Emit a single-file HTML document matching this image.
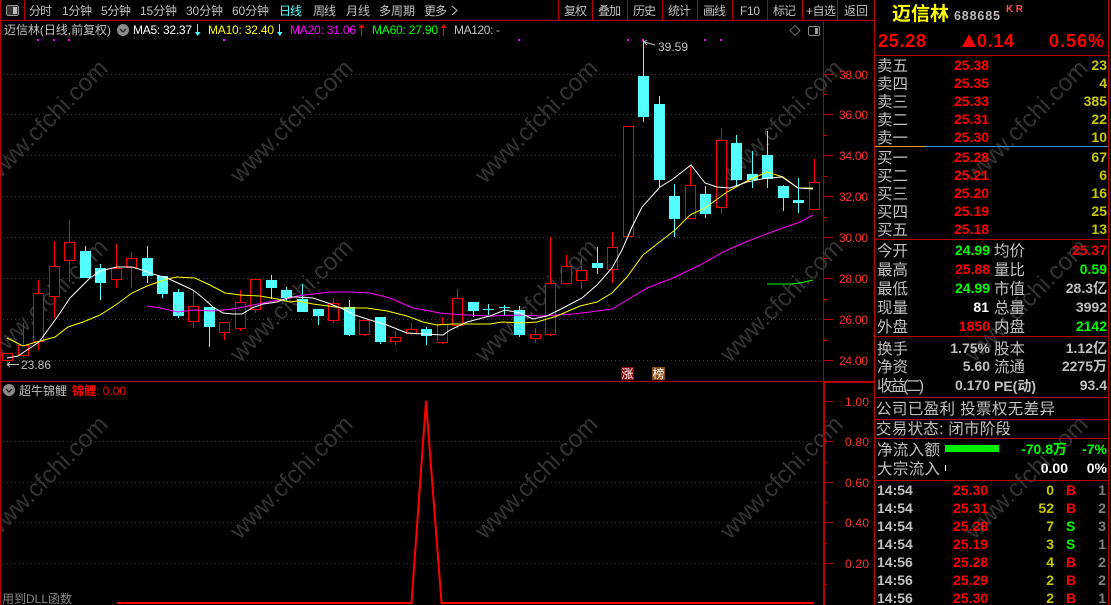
<!DOCTYPE html>
<html><head><meta charset="utf-8">
<style>
html,body{margin:0;padding:0;background:#000;width:1111px;height:605px;overflow:hidden}
svg{display:block;position:absolute;left:0;top:0}
text{font-family:"Liberation Sans","WenQuanYi Zen Hei","Noto Sans CJK SC",sans-serif;white-space:pre}
.g{fill:#c0c0c0}.r{fill:#ff0000}.gn{fill:#00ff00}.y{fill:#c8c800}.w{fill:#fff}
.t{font-size:12px;fill:#c0c0c0}
.a{font-size:12px;fill:#ff3232}
.l{font-size:15.5px;fill:#c0c0c0}
.n{font-size:14px;font-weight:bold}
.e{text-anchor:end}
.wm{font-size:24.5px;fill:#333;text-anchor:middle}
</style></head><body>
<svg width="1111" height="605" viewBox="0 0 1111 605" xmlns="http://www.w3.org/2000/svg">
<rect width="1111" height="605" fill="#000"/>
<!-- watermarks -->
<g>
<text class="wm" transform="translate(52,127) rotate(-45)">www.cfchi.com</text>
<text class="wm" transform="translate(297,127) rotate(-45)">www.cfchi.com</text>
<text class="wm" transform="translate(542,127) rotate(-45)">www.cfchi.com</text>
<text class="wm" transform="translate(787,127) rotate(-45)">www.cfchi.com</text>
<text class="wm" transform="translate(1032,127) rotate(-45)">www.cfchi.com</text>
<text class="wm" transform="translate(52,306) rotate(-45)">www.cfchi.com</text>
<text class="wm" transform="translate(297,306) rotate(-45)">www.cfchi.com</text>
<text class="wm" transform="translate(542,306) rotate(-45)">www.cfchi.com</text>
<text class="wm" transform="translate(787,306) rotate(-45)">www.cfchi.com</text>
<text class="wm" transform="translate(1032,306) rotate(-45)">www.cfchi.com</text>
<text class="wm" transform="translate(52,483) rotate(-45)">www.cfchi.com</text>
<text class="wm" transform="translate(297,483) rotate(-45)">www.cfchi.com</text>
<text class="wm" transform="translate(542,483) rotate(-45)">www.cfchi.com</text>
<text class="wm" transform="translate(787,483) rotate(-45)">www.cfchi.com</text>
<text class="wm" transform="translate(1032,483) rotate(-45)">www.cfchi.com</text>
</g>
<!-- grid -->
<g stroke="#d00000" stroke-dasharray="1 3" shape-rendering="crispEdges" fill="none">
<path d="M3 74.5H823M3 114.5H823M3 155.5H823M3 196.5H823M3 237.5H823M3 278.5H823M3 319.5H823M3 360.5H823"/>
<path stroke="#b00000" d="M3 441.5H823M3 482.5H823M3 522.5H823M3 563.5H823"/>
</g>
<!-- frame -->
<g fill="none" stroke="#b80000" shape-rendering="crispEdges">
<path d="M0.5 0V605M1 20.5H875M24.5 0V20M558.5 0V20M592.5 0V20M627.5 0V20M662.5 0V20M697.5 0V20M732.5 0V20M767.5 0V20M802.5 0V20M837.5 0V20"/>
<path d="M823.5 20V605M874.5 0V605M1108.5 0V605M0 381.5H875"/>
<path d="M875 55.5H1109M875 239.5H1109M875 336.5H1109M875 397.5H1109M875 419.5H1109M875 438.5H1109M875 480.5H1109"/>
<path d="M823 382.5H875M824.5 382V605"/>
<path d="M823 74.5H833M823 94.5H827M823 114.5H833M823 135.5H827M823 155.5H833M823 176.5H827M823 196.5H833M823 217.5H827M823 237.5H833M823 258.5H827M823 278.5H833M823 299.5H827M823 319.5H833M823 340.5H827M823 360.5H833"/>
<path d="M823 401.5H833M823 421.5H827M823 441.5H833M823 462.5H827M823 482.5H833M823 502.5H827M823 522.5H833M823 543.5H827M823 563.5H833M823 584.5H827"/>
</g>
<path d="M875 146.5H926" stroke="#ff9a20" shape-rendering="crispEdges"/>
<path d="M926 146.5H1108" stroke="#3a96e8" shape-rendering="crispEdges"/>
<!-- toolbar icon -->
<rect x="6.5" y="5.5" width="12" height="10" rx="2" fill="#333" stroke="#9a9a9a"/>
<rect x="13" y="7" width="4" height="7" fill="#bbb"/>
<!-- toolbar -->
<g class="t">
<text x="29" y="15" textLength="23">分时</text>
<text x="62" y="15" textLength="30">1分钟</text>
<text x="101" y="15" textLength="30">5分钟</text>
<text x="140" y="15" textLength="37">15分钟</text>
<text x="186" y="15" textLength="37">30分钟</text>
<text x="232" y="15" textLength="37">60分钟</text>
<text x="279" y="15" textLength="23" style="fill:#54ffff">日线</text>
<text x="313" y="15" textLength="23">周线</text>
<text x="346" y="15" textLength="24">月线</text>
<text x="379" y="15" textLength="36">多周期</text>
<text x="424" y="15" textLength="23">更多</text>
<text x="564" y="15" textLength="23">复权</text>
<text x="598" y="15" textLength="23">叠加</text>
<text x="633" y="15" textLength="23">历史</text>
<text x="668" y="15" textLength="23">统计</text>
<text x="703" y="15" textLength="23">画线</text>
<text x="740" y="15" textLength="20">F10</text>
<text x="773" y="15" textLength="23">标记</text>
<text x="806" y="15" textLength="30">+自选</text>
<text x="844" y="15" textLength="24">返回</text>
</g>
<path d="M452 6L457 10.5L452 15" fill="none" stroke="#c0c0c0"/>
<!-- legend -->
<text x="4" y="34" class="t" textLength="107">迈信林(日线,前复权)</text>
<circle cx="123" cy="30" r="6" fill="#8a8a8a"/>
<path d="M120 29l3 3l3-3" fill="none" stroke="#222" stroke-width="1.3"/>
<text x="133" y="34" font-size="12" fill="#fff" textLength="59">MA5: 32.37</text>
<path d="M197.5 24V34" stroke="#54ffff" shape-rendering="crispEdges"/><path d="M195 32h5.500l-2.700 4z" fill="#54ffff"/>
<text x="208" y="34" font-size="12" fill="#ffff00" textLength="66">MA10: 32.40</text>
<path d="M279.500 24V34" stroke="#54ffff" shape-rendering="crispEdges"/><path d="M277 32h5.500l-2.700 4z" fill="#54ffff"/>
<text x="290" y="34" font-size="12" fill="#ff00ff" textLength="66">MA20: 31.06</text>
<path d="M361.500 27V36" stroke="#ff0000" shape-rendering="crispEdges"/><path d="M359 28h5.500l-2.700-4z" fill="#ff0000"/>
<text x="372" y="34" font-size="12" fill="#00ff00" textLength="66">MA60: 27.90</text>
<path d="M443.500 27V36" stroke="#ff0000" shape-rendering="crispEdges"/><path d="M441 28h5.500l-2.700-4z" fill="#ff0000"/>
<text x="454" y="34" class="t" textLength="46">MA120: -</text>
<path d="M795 25.500L800 30.500L795 35.500L790 30.500Z" fill="none" stroke="#666"/>
<rect x="808.500" y="26.500" width="11" height="9" rx="1.500" fill="none" stroke="#888"/>
<rect x="815" y="28" width="3" height="6" fill="#999"/>
<!-- dots -->
<g fill="#ff00ff">
<rect x="37" y="39" width="2" height="2"/><rect x="53" y="39" width="2" height="2"/><rect x="68" y="39" width="2" height="2"/><rect x="223" y="39" width="2" height="2"/><rect x="518" y="39" width="2" height="2"/><rect x="627" y="39" width="2" height="2"/><rect x="642" y="39" width="2" height="2"/><rect x="704" y="39" width="2" height="2"/><rect x="720" y="39" width="2" height="2"/>
</g>
<!-- candles -->
<path shape-rendering="crispEdges" fill="#000" stroke="#ff0000" d="
M2.500 353.500h10v7h-10zM7.500 360V363
M18.500 345.500h10v10h-10zM23.500 323V345M23.500 356V357
M33.500 293.500h10v48h-10zM38.500 280V293M38.500 342V350
M49.500 266.500h10v30h-10zM54.500 241V266M54.500 297V318
M64.500 242.500h10v18h-10zM69.500 220V242M69.500 261V282
M111.500 268.500h10v11h-10zM116.500 244V268M116.500 280V288
M126.500 258.500h10v9h-10zM131.500 252V258M131.500 268V288
M188.500 306.500h10v15h-10zM193.500 290V306M193.500 322V328
M219.500 322.500h10v10h-10zM224.500 333V340
M235.500 302.500h10v26h-10zM240.500 290V302M240.500 329V331
M250.500 279.500h10v30h-10zM255.500 310V313
M328.500 303.500h10v17h-10zM333.500 298V303M333.500 321V323
M359.500 320.500h10v14h-10zM364.500 335V336
M390.500 337.500h10v4h-10zM395.500 331V337M395.500 342V345
M406.500 329.500h10v4h-10zM411.500 323V329M411.500 334V335
M437.500 324.500h10v18h-10zM442.500 317V324M442.500 343V344
M452.500 298.500h10v27h-10zM457.500 289V298M457.500 326V329
M530.500 334.500h10v4h-10zM535.500 328V334M535.500 339V343
M545.500 283.500h10v51h-10zM550.500 237V283M550.500 335V336
M561.500 266.500h10v17h-10zM566.500 255V266
M576.500 270.500h10v10h-10zM581.500 258V270M581.500 281V289
M607.500 247.500h10v22h-10zM612.500 232V247M612.500 270V283
M623.500 126.500h10v110h-10z
M685.500 185.500h10v33h-10zM690.500 167V185
M716.500 140.500h10v67h-10zM721.500 128V140M721.500 208V214
M809.500 182.500h10v27h-10zM814.500 159V182"/>
<path shape-rendering="crispEdges" fill="none" stroke="#54ffff" d="
M85.500 246V251M100.500 264V300M147.500 246V283M162.500 276V298M178.500 289V318M209.500 307V347M271.500 275V299M286.500 287V301M302.500 284V312M318.500 309V325M349.500 300V336M380.500 317V344M426.500 327V345M473.500 302V317M488.500 304V315M504.500 305V315M519.500 306V337M597.500 247V274M643.500 40V122M659.500 96V187M674.500 184V237M705.500 186V218M736.500 135V187M752.500 151V188M767.500 131V188M783.500 185V211M798.500 178V213"/>
<path shape-rendering="crispEdges" fill="#54ffff" d="
M80 251h11v27h-11zM95 268h11v15h-11zM142 258h11v18h-11zM157 276h11v18h-11zM173 292h11v24h-11zM204 307h11v20h-11zM266 280h11v8h-11zM281 290h11v8h-11zM297 299h11v13h-11zM313 309h11v7h-11zM344 307h11v28h-11zM375 317h11v25h-11zM421 329h11v7h-11zM468 302h11v9h-11zM483 309h11v1h-11zM499 307h11v1h-11zM514 310h11v25h-11zM592 263h11v5h-11zM638 76h11v41h-11zM654 104h11v76h-11zM669 196h11v23h-11zM700 194h11v20h-11zM731 143h11v37h-11zM747 174h11v6h-11zM762 155h11v24h-11zM778 186h11v12h-11zM793 200h11v3h-11z"/>
<!-- MA lines -->
<g fill="none" stroke-width="1">
<polyline stroke="#ff00ff" points="147,306 160,308 178,312 193,310 213,311 233,309 253,305 273,301 290,298 297,296 313,294 330,292 350,292 370,293 390,298 413,308 440,313 450,314 467,315 490,316 520,315 540,316 573,314 590,312 612,309 627,300 647,288 673,278 700,265 723,252 743,243 777,230 800,222 813,215"/>
<polyline stroke="#ffff00" points="7,338 23,346 33,343 55,337 68,327 83,322 100,315 117,304 132,293 147,286 167,279 177,277 195,278 210,285 225,293 240,295 260,296 277,299 290,302 297,301 313,304 343,308 367,308 387,311 407,316 423,322 437,325 453,324 490,324 502,322 523,323 537,322 557,316 573,309 580,306 597,302 612,293 627,277 643,255 675,230 690,215 705,208 727,192 747,181 767,172 783,177 798,188 813,188"/>
<polyline stroke="#ffffff" points="7,358 18,356 27,350 39,342 50,327 60,313 70,298 80,288 90,278 100,271 117,267 132,267 142,270 153,274 167,278 180,284 193,290 203,298 213,307 223,313 233,314 242,314 252,308 263,304 277,302 290,297 297,297 313,298 328,303 343,309 355,315 370,320 387,325 407,333 423,334 443,335 450,330 467,322 490,316 505,310 520,313 533,319 547,316 563,308 582,298 597,285 612,268 622,250 632,227 642,207 660,187 673,179 691,165 705,183 717,187 730,188 747,182 767,178 782,177 798,188 813,189"/>
<polyline stroke="#00ff00" points="767,284 790,284 800,283 813,280"/>
</g>
<!-- hi/lo labels -->
<path d="M644 42L650 43.500L655 45M644 42L647 40M644 42L647 45" fill="none" stroke="#c0c0c0"/>
<text x="658" y="51" class="t" textLength="30">39.59</text>
<path d="M7 364.500H19M7 364.500L10 362M7 364.500L10 367" fill="none" stroke="#c0c0c0"/>
<text x="21" y="369" class="t" textLength="30">23.86</text>
<!-- axis labels -->
<g class="a">
<text x="839" y="79" textLength="29">38.00</text>
<text x="839" y="119" textLength="29">36.00</text>
<text x="839" y="160" textLength="29">34.00</text>
<text x="839" y="201" textLength="29">32.00</text>
<text x="839" y="242" textLength="29">30.00</text>
<text x="839" y="283" textLength="29">28.00</text>
<text x="839" y="324" textLength="29">26.00</text>
<text x="839" y="365" textLength="29">24.00</text>
<text x="845" y="406" textLength="24">1.00</text>
<text x="845" y="446" textLength="24">0.80</text>
<text x="845" y="487" textLength="24">0.60</text>
<text x="845" y="527" textLength="24">0.40</text>
<text x="845" y="568" textLength="24">0.20</text>
</g>
<!-- badges -->
<rect x="621" y="367" width="13" height="13" fill="#8a0a0a"/>
<text x="621.500" y="378" font-size="12" fill="#fff">涨</text>
<rect x="652" y="367" width="13" height="13" fill="#8b4a10"/>
<text x="652.500" y="378" font-size="12" fill="#fff">榜</text>
<!-- lower panel -->
<circle cx="9" cy="390" r="6" fill="#8a8a8a"/>
<path d="M6 389l3 3l3-3" fill="none" stroke="#222" stroke-width="1.300"/>
<text x="19" y="395" class="t" textLength="48">超牛锦鲤</text>
<text x="72" y="395" font-size="12" font-weight="bold" fill="#ff0000" textLength="24">锦鲤</text>
<text x="96" y="395" font-size="12" fill="#ff0000" textLength="30">: 0.00</text>
<polyline points="117,603 411.500,603 426,401 441.500,603 814,603" fill="none" stroke="#ff0000" stroke-width="2"/>
<text x="2" y="603" font-size="12" fill="#888" textLength="70">用到DLL函数</text>
<!-- right panel head -->
<text x="892" y="20" font-size="19" font-weight="bold" fill="#ffff00" textLength="57">迈信林</text>
<text x="954" y="20" font-size="12.500" fill="#bbb" font-weight="bold" textLength="46">688685</text>
<text x="1006" y="12" font-size="10" font-weight="bold" fill="#ff5050" textLength="17">KR</text>
<text x="878" y="47" font-size="18" font-weight="bold" fill="#ff0000" textLength="48">25.28</text>
<path d="M962 47L969 34L976 47Z" fill="#ff0000"/>
<text x="977" y="47" font-size="18" font-weight="bold" fill="#ff0000" textLength="37">0.14</text>
<text x="1049" y="47" font-size="18" font-weight="bold" fill="#ff0000" textLength="55">0.56%</text>
<!-- order book -->
<g class="l">
<text x="877" y="71">卖五</text><text x="877" y="89">卖四</text><text x="877" y="107">卖三</text><text x="877" y="125">卖二</text><text x="877" y="143">卖一</text>
<text x="877" y="163">买一</text><text x="877" y="181">买二</text><text x="877" y="199">买三</text><text x="877" y="217">买四</text><text x="877" y="235">买五</text>
</g>
<g class="n r">
<text x="954" y="70">25.38</text><text x="954" y="88">25.35</text><text x="954" y="106">25.33</text><text x="954" y="124">25.31</text><text x="954" y="142">25.30</text>
<text x="954" y="162">25.28</text><text x="954" y="180">25.21</text><text x="954" y="198">25.20</text><text x="954" y="216">25.19</text><text x="954" y="234">25.18</text>
</g>
<g class="n y e">
<text x="1107" y="70">23</text><text x="1107" y="88">4</text><text x="1107" y="106">385</text><text x="1107" y="124">22</text><text x="1107" y="142">10</text>
<text x="1107" y="162">67</text><text x="1107" y="180">6</text><text x="1107" y="198">16</text><text x="1107" y="216">25</text><text x="1107" y="234">13</text>
</g>
<!-- stats -->
<g class="l">
<text x="877" y="256">今开</text><text x="877" y="275">最高</text><text x="877" y="294">最低</text><text x="877" y="313">现量</text><text x="877" y="332">外盘</text>
<text x="994" y="256">均价</text><text x="994" y="275">量比</text><text x="994" y="294">市值</text><text x="994" y="313">总量</text><text x="994" y="332">内盘</text>
<text x="877" y="354">换手</text><text x="877" y="372">净资</text><text x="877" y="391" textLength="47">收益(二)</text>
<text x="994" y="354">股本</text><text x="994" y="372">流通</text>
<text x="994" y="391" font-weight="bold" font-size="14">PE(动)</text>
<text x="876" y="414" textLength="179">公司已盈利 投票权无差异</text>
<text x="876" y="434" textLength="135">交易状态: 闭市阶段</text>
<text x="877" y="455" textLength="63">净流入额</text>
<text x="877" y="474" textLength="63">大宗流入</text>
</g>
<g class="n e">
<text x="990" y="255" style="fill:#00ff00">24.99</text>
<text x="990" y="274" style="fill:#ff0000">25.88</text>
<text x="990" y="293" style="fill:#00ff00">24.99</text>
<text x="989" y="312" style="fill:#fff">81</text>
<text x="990" y="331" style="fill:#ff0000">1850</text>
<text x="1107" y="255" style="fill:#ff0000">25.37</text>
<text x="1107" y="274" style="fill:#00ff00">0.59</text>
<text x="1107" y="293" style="fill:#c0c0c0">28.3亿</text>
<text x="1107" y="312" style="fill:#c0c0c0">3992</text>
<text x="1107" y="331" style="fill:#00ff00">2142</text>
<text x="990" y="353" style="fill:#c0c0c0">1.75%</text>
<text x="1107" y="353" style="fill:#c0c0c0">1.12亿</text>
<text x="990" y="371" style="fill:#c0c0c0">5.60</text>
<text x="1107" y="371" style="fill:#c0c0c0">2275万</text>
<text x="990" y="390" style="fill:#c0c0c0">0.170</text>
<text x="1107" y="390" style="fill:#c0c0c0">93.4</text>
</g>
<!-- flow -->
<rect x="945" y="445" width="54" height="7" fill="#00ee00"/>
<rect x="945" y="465" width="1" height="6" fill="#fff"/>
<text x="1067" y="454" font-size="14" font-weight="bold" fill="#00ff00" text-anchor="end">-70.8万</text>
<text x="1107" y="454" font-size="14" font-weight="bold" fill="#00ff00" text-anchor="end">-7%</text>
<text x="1068" y="473" font-size="14" font-weight="bold" fill="#fff" text-anchor="end">0.00</text>
<text x="1107" y="473" font-size="14" font-weight="bold" fill="#fff" text-anchor="end">0%</text>
<!-- ticks -->
<g class="n" style="fill:#c0c0c0">
<text x="877" y="495">14:54</text><text x="877" y="513">14:54</text><text x="877" y="531">14:54</text><text x="877" y="549">14:54</text><text x="877" y="567">14:56</text><text x="877" y="585">14:56</text><text x="877" y="603">14:56</text>
</g>
<g class="n r">
<text x="953" y="495">25.30</text><text x="953" y="513">25.31</text><text x="953" y="531">25.28</text><text x="953" y="549">25.19</text><text x="953" y="567">25.28</text><text x="953" y="585">25.29</text><text x="953" y="603">25.30</text>
</g>
<g class="n y e">
<text x="1054" y="495">0</text><text x="1054" y="513">52</text><text x="1054" y="531">7</text><text x="1054" y="549">3</text><text x="1054" y="567">4</text><text x="1054" y="585">2</text><text x="1054" y="603">2</text>
</g>
<g class="n">
<text x="1066" y="495" fill="#ff0000">B</text><text x="1066" y="513" fill="#ff0000">B</text><text x="1066" y="531" fill="#00ff00">S</text><text x="1066" y="549" fill="#00ff00">S</text><text x="1066" y="567" fill="#ff0000">B</text><text x="1066" y="585" fill="#ff0000">B</text><text x="1066" y="603" fill="#ff0000">B</text>
</g>
<g class="n e" style="fill:#808080">
<text x="1106" y="495">1</text><text x="1106" y="513">2</text><text x="1106" y="531">3</text><text x="1106" y="549">1</text><text x="1106" y="567">2</text><text x="1106" y="585">2</text><text x="1106" y="603">1</text>
</g>
</svg>
</body></html>
